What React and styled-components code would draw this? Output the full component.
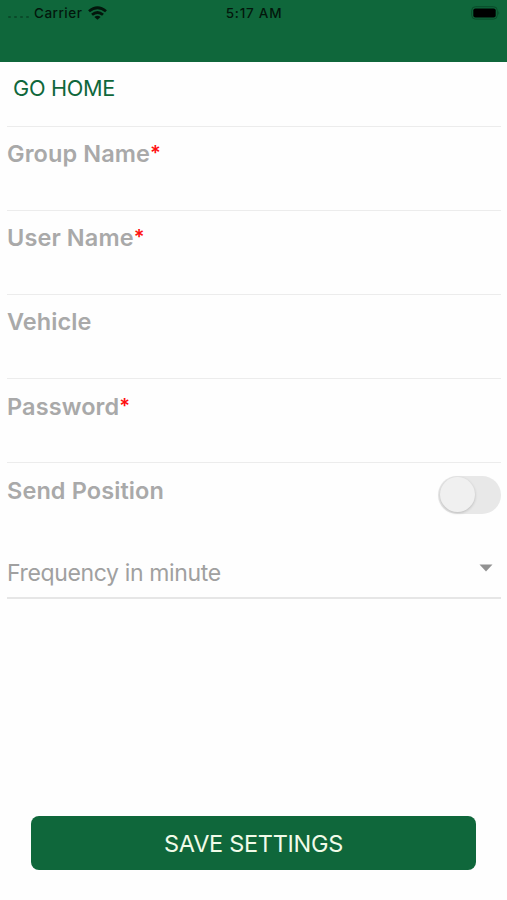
import React from 'react';
import styled, { createGlobalStyle } from 'styled-components';

const green = '#0f673b';
const gray = '#a9a9a9';

const GlobalStyle = createGlobalStyle`
    body {
        margin: 0;
        background: white;
        font-family: Inter, 'Liberation Sans', sans-serif;
    }
`;

const Screen = styled.div`
    display: flex;
    flex-direction: column;
    box-sizing: border-box;
    height: 900px;
    overflow: hidden;
    background: #fefefe;
`;

// status bar + empty header
const Header = styled.header`
    flex: none;
    height: 62px;
    background: ${green};
`;

const StatusBar = styled.div`
    display: grid;
    grid-template-columns: 1fr auto 1fr;
    align-items: center;
    height: 26px;
    padding: 0 7px 0 8px;
    color: #03170c;
    font-size: 13.5px;
    font-weight: 500;
`;

const Carrier = styled.div`
    display: flex;
    align-items: center;
    letter-spacing: 0.5px;
`;

const SignalDots = styled.div`
    display: flex;
    gap: 3.5px;
    width: 26px;
    padding-top: 8px;

    i {
        width: 2.5px;
        height: 2.5px;
        border-radius: 50%;
        background: #0a4a2a;
    }
`;

const WifiIcon = styled.svg`
    margin-left: 5.5px;
`;

const Clock = styled.div`
    letter-spacing: 0.75px;
`;

const BatteryIcon = styled.svg`
    justify-self: end;
`;

const HomeLink = styled.a`
    flex: none;
    box-sizing: border-box;
    height: 63.7px;
    padding: 13px 0 0 13px;
    color: ${green};
    font-size: 21.7px;
    line-height: 26px;
    letter-spacing: -0.3px;
`;

const Form = styled.div`
    flex: 1;
    display: flex;
    flex-direction: column;
    padding: 0 6px 0 7px;
`;

const Field = styled.div`
    flex: none;
    display: flex;
    justify-content: space-between;
    box-sizing: border-box;
    height: 84.2px;
    padding-top: 12.4px;
    border-top: 1px solid #ececec;
`;

const Label = styled.label`
    color: ${gray};
    font-size: 23.5px;
    font-weight: 600;
    line-height: 30px;
    letter-spacing: 0.1px;
`;

const Required = styled.span`
    position: relative;
    top: -2px;
    color: #ff1010;
    font-size: 20px;
    font-weight: 600;
    line-height: 1;
`;

const Switch = styled.div`
    box-sizing: border-box;
    width: 63px;
    height: 38px;
    padding: 1px 2px;
    border-radius: 19px;
    background: #e8e8e8;
`;

const Knob = styled.div`
    width: 35px;
    height: 35px;
    border-radius: 50%;
    background: #f0f0f0;
    box-shadow: 0 1px 3px rgba(0, 0, 0, 0.2);
`;

const Select = styled.div`
    display: flex;
    justify-content: space-between;
    box-sizing: border-box;
    height: 52px;
    padding: 11px 8px 0 0;
    border-bottom: 2px solid #e6e6e6;
    color: #a0a0a0;
    font-size: 23px;
    line-height: 30px;
    letter-spacing: -0.36px;
`;

const Caret = styled.svg`
    margin-top: 6px;
`;

const SaveButton = styled.button`
    flex: none;
    height: 54px;
    margin: 0 31px;
    margin-bottom: 30px;
    padding: 0;
    border: none;
    border-radius: 8px;
    background: ${green};
    color: #f1fbe9;
    font-family: inherit;
    font-size: 23.5px;
    letter-spacing: -0.3px;
`;

const fields = [
    { name: 'Group Name', required: true },
    { name: 'User Name', required: true },
    { name: 'Vehicle' },
    { name: 'Password', required: true },
];

const App = () => {
    return (
        <>
            <GlobalStyle/>
            <Screen>
                <Header>
                    <StatusBar>
                        <Carrier>
                            <SignalDots><i/><i/><i/><i/></SignalDots>
                            Carrier
                            <WifiIcon width="19" height="14" viewBox="0 0 19 14">
                                <g fill="none" stroke="#03170c" strokeWidth="2.8">
                                    <path d="M1 5.3Q9.5 -1.8 18 5.3"/>
                                    <path d="M4 8.8Q9.5 4.2 15 8.8"/>
                                </g>
                                <path d="M6.4 11Q9.5 8.4 12.6 11L9.5 13.8Z" fill="#03170c"/>
                            </WifiIcon>
                        </Carrier>
                        <Clock>5:17 AM</Clock>
                        <BatteryIcon width="29" height="14" viewBox="0 0 29 14">
                            <rect x="0.7" y="0.7" width="25.6" height="12.4" rx="3.8" fill="none" stroke="#0a4c2a" strokeWidth="1"/>
                            <rect x="2.3" y="2.4" width="22.4" height="9" rx="2" fill="#000"/>
                            <path d="M27.4 4.8Q29 6.9 27.4 9Z" fill="#0a4c2a"/>
                        </BatteryIcon>
                    </StatusBar>
                </Header>
                <HomeLink>GO HOME</HomeLink>
                <Form>
                    {fields.map(field => (
                        <Field key={field.name}>
                            <Label>
                                {field.name}
                                {field.required && <Required>*</Required>}
                            </Label>
                        </Field>
                    ))}
                    <Field>
                        <Label>Send Position</Label>
                        <Switch><Knob/></Switch>
                    </Field>
                    <Select>
                        Frequency in minute
                        <Caret width="14" height="8" viewBox="0 0 14 8">
                            <path d="M0.5 0.5H13.5L7 7.5Z" fill="#929292"/>
                        </Caret>
                    </Select>
                </Form>
                <SaveButton>SAVE SETTINGS</SaveButton>
            </Screen>
        </>
    );
};

export default App;
